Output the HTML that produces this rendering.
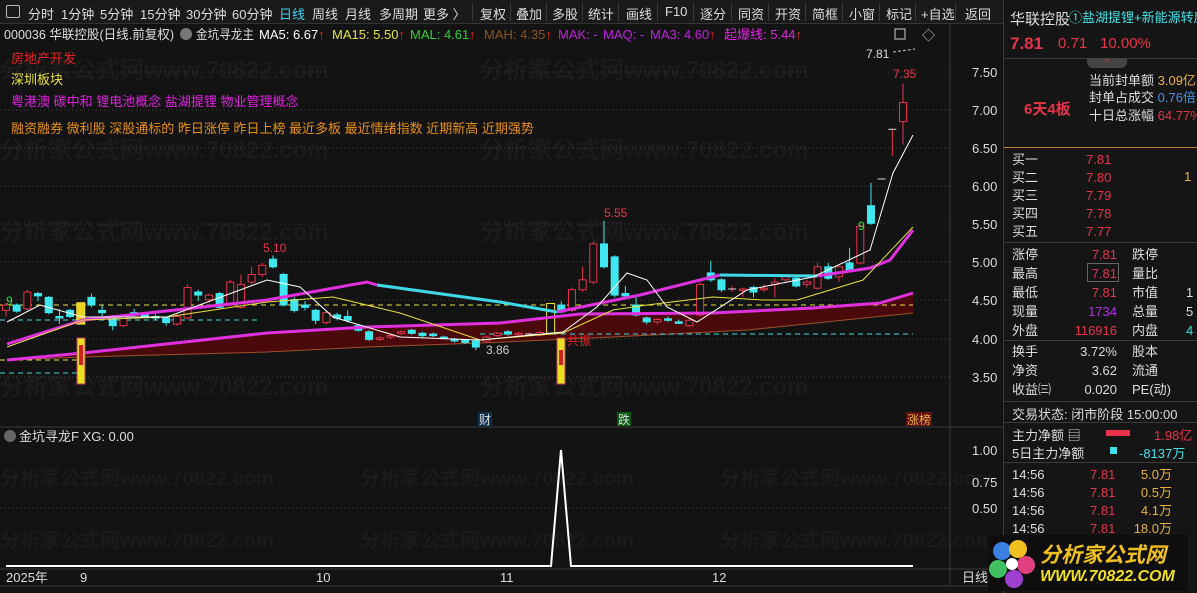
<!DOCTYPE html>
<html><head><meta charset="utf-8">
<style>
*{margin:0;padding:0;box-sizing:border-box}
body{width:1197px;height:593px;background:#131313;overflow:hidden;font-family:"Liberation Sans","Noto Sans CJK SC",sans-serif;color:#ccc;position:relative}
.abs{position:absolute;white-space:nowrap}
#tb{position:absolute;left:0;top:0;width:1003px;height:24px;background:#1a1a1a;border-bottom:1px solid #333;font-size:13px;color:#ddd}
#tb span{position:absolute;top:4px}
.sep{position:absolute;top:3px;width:1px;height:18px;background:#3a3a3a}
#rp{position:absolute;left:1003px;top:0;width:194px;height:593px;background:#151515;border-left:1px solid #3a3a3a;font-size:13px}
.r{position:absolute;white-space:nowrap}
.red{color:#e8344a}.cy{color:#3fe0e8}.yl{color:#e8b040}
</style></head><body>

<svg id="ch" width="1003" height="593" style="position:absolute;left:0;top:0">
<g font-family="Liberation Sans,Noto Sans CJK SC,sans-serif" font-size="24" fill="#1b1b1b" font-weight="bold">
<text x="0" y="78">分析家公式网www.70822.com</text><text x="480" y="78">分析家公式网www.70822.com</text>
<text x="0" y="158">分析家公式网www.70822.com</text><text x="480" y="158">分析家公式网www.70822.com</text>
<text x="0" y="240">分析家公式网www.70822.com</text><text x="480" y="240">分析家公式网www.70822.com</text>
<text x="0" y="395">分析家公式网www.70822.com</text><text x="480" y="395">分析家公式网www.70822.com</text>
<text x="0" y="485" font-size="20">分析家公式网www.70822.com</text><text x="360" y="485" font-size="20">分析家公式网www.70822.com</text><text x="720" y="485" font-size="20">分析家公式网www.70822.com</text>
<text x="0" y="547" font-size="20">分析家公式网www.70822.com</text><text x="360" y="547" font-size="20">分析家公式网www.70822.com</text><text x="720" y="547" font-size="20">分析家公式网www.70822.com</text>
</g>
<g stroke="#444" stroke-dasharray="1 3" stroke-width="1">
<line x1="0" y1="72" x2="950" y2="72"/><line x1="0" y1="110" x2="950" y2="110"/><line x1="0" y1="148" x2="950" y2="148"/><line x1="0" y1="186" x2="950" y2="186"/><line x1="0" y1="224" x2="950" y2="224"/><line x1="0" y1="262" x2="950" y2="262"/><line x1="0" y1="300" x2="950" y2="300"/><line x1="0" y1="339" x2="950" y2="339"/><line x1="0" y1="377" x2="950" y2="377"/>
<line x1="0" y1="508" x2="950" y2="508"/>
</g>
<line x1="0" y1="427" x2="1003" y2="427" stroke="#3a3a3a"/>
<line x1="950" y1="24" x2="950" y2="585" stroke="#3a3a3a"/>
<line x1="0" y1="569" x2="1003" y2="569" stroke="#3a3a3a"/>
<line x1="0" y1="586" x2="1003" y2="586" stroke="#3a3a3a"/>
<polygon points="7,360 83,353 267,333 367,327 500,323 580,314 713,313 813,308 880,303 913,293 913,313 747,330 613,337 480,343 367,347 267,352 83,357 7,360" fill="#4a0a0c"/>
<polyline points="7,360 83,357 267,352 367,347 480,343 613,337 747,330 913,313" fill="none" stroke="#a0502a" stroke-width="1"/>
<line x1="0" y1="305" x2="913" y2="305" stroke="#e8e040" stroke-dasharray="5 4"/>
<line x1="0" y1="320" x2="260" y2="320" stroke="#40d8e0" stroke-dasharray="5 4"/>
<line x1="0" y1="360" x2="80" y2="360" stroke="#e8e040" stroke-dasharray="5 4"/>
<line x1="0" y1="373" x2="80" y2="373" stroke="#40d8e0" stroke-dasharray="5 4"/>
<line x1="480" y1="334" x2="913" y2="334" stroke="#40d8e0" stroke-dasharray="5 4"/>
<g id="cd"></g>
<polyline points="7,360 83,353 267,333 367,327 500,323 580,314 713,313 813,308 880,303 913,293" fill="none" stroke="#e030e0" stroke-width="3"/>
<polyline points="7,344 83,320 267,300 367,282 377,285" fill="none" stroke="#e030e0" stroke-width="3"/>
<polyline points="377,285 500,302 557,312" fill="none" stroke="#40d8e8" stroke-width="3"/>
<polyline points="557,312 640,295 720,275" fill="none" stroke="#e030e0" stroke-width="3"/>
<polyline points="720,275 817,276" fill="none" stroke="#40d8e8" stroke-width="3"/>
<polyline points="817,276 870,268 890,260 913,230" fill="none" stroke="#e030e0" stroke-width="3"/>
<polyline points="7,347 83,320 167,317 267,302 333,297 400,313 480,340 563,333 613,310 647,305 713,297 763,300 797,300 863,280 913,227" fill="none" stroke="#e8e040" stroke-width="1"/>
<polyline points="7,322 40,305 83,317 167,317 267,280 300,287 333,317 400,337 480,340 563,332 597,307 627,273 647,280 667,307 697,322 747,290 813,277 870,250 893,173 913,135" fill="none" stroke="#fff" stroke-width="1"/>
<rect x="77" y="338" width="8" height="46" fill="#e8e020" stroke="#c04060"/><rect x="79" y="345" width="4" height="20" fill="#d02020"/>
<rect x="557" y="338" width="8" height="46" fill="#e8e020" stroke="#c04060"/><rect x="559" y="350" width="4" height="15" fill="#d02020"/>
<g font-size="12" font-family="Liberation Sans,sans-serif">
<text x="263" y="252" fill="#e8344a">5.10</text>
<text x="604" y="217" fill="#e8344a">5.55</text>
<text x="893" y="78" fill="#e8344a">7.35</text>
<text x="866" y="58" fill="#ddd">7.81</text>
<text x="486" y="354" fill="#ccc">3.86</text>
<text x="6" y="305" fill="#30e030">9</text>
<text x="858" y="230" fill="#30e030">9</text>
<text x="567" y="345" fill="#e82020">共振</text>
</g>
<line x1="893" y1="52" x2="915" y2="49" stroke="#ccc" stroke-dasharray="3 2"/>
<g font-size="13" fill="#ddd" font-family="Liberation Sans,sans-serif">
<text x="972" y="77">7.50</text><text x="972" y="115">7.00</text><text x="972" y="153">6.50</text><text x="972" y="191">6.00</text><text x="972" y="229">5.50</text><text x="972" y="267">5.00</text><text x="972" y="305">4.50</text><text x="972" y="344">4.00</text><text x="972" y="382">3.50</text>
<text x="972" y="455">1.00</text><text x="972" y="487">0.75</text><text x="972" y="513">0.50</text>
</g>
<rect x="478" y="412" width="14" height="14" fill="#103050"/><text x="479" y="424" font-size="12" fill="#ddd">财</text>
<rect x="617" y="412" width="14" height="14" fill="#0a5a10"/><text x="618" y="424" font-size="12" fill="#ddd">跌</text>
<rect x="906" y="412" width="26" height="14" fill="#601010"/><text x="907" y="424" font-size="12" fill="#e8b040">涨榜</text>
<polyline points="6,566 551,566 561,450 571,566 913,566" fill="none" stroke="#fff" stroke-width="2"/>
<circle cx="10" cy="436" r="6" fill="#666"/>
<text x="19" y="441" font-size="13" fill="#ddd">金坑寻龙F  XG: 0.00</text>
<g font-size="13" fill="#ddd"><text x="6" y="582">2025年</text><text x="80" y="582">9</text><text x="316" y="582">10</text><text x="500" y="582">11</text><text x="712" y="582">12</text><text x="962" y="582">日线</text></g>
<circle cx="186" cy="34" r="6" fill="#777"/>
<text x="4" y="39" font-size="13" fill="#ddd" textLength="170" lengthAdjust="spacingAndGlyphs">000036 华联控股(日线.前复权)</text>
<text x="196" y="39" font-size="13" fill="#ddd" textLength="58" lengthAdjust="spacingAndGlyphs">金坑寻龙主</text>
<text x="259" y="39" font-size="13" fill="#fff">MA5: 6.67<tspan fill="#e82020">↑</tspan></text>
<text x="332" y="39" font-size="13" fill="#e8e040">MA15: 5.50<tspan fill="#e82020">↑</tspan></text>
<text x="410" y="39" font-size="13" fill="#30d030">MAL: 4.61<tspan fill="#e82020">↑</tspan></text>
<text x="484" y="39" font-size="13" fill="#8a5520">MAH: 4.35<tspan fill="#e82020">↑</tspan></text>
<text x="558" y="39" font-size="13" fill="#c020e0">MAK: -</text>
<text x="603" y="39" font-size="13" fill="#c020e0">MAQ: -</text>
<text x="650" y="39" font-size="13" fill="#c020e0">MA3: 4.60<tspan fill="#e82020">↑</tspan></text>
<text x="724" y="39" font-size="13" fill="#e020e0">起爆线: 5.44<tspan fill="#e82020">↑</tspan></text>
<text x="922" y="40" font-size="13" fill="#ccc">◇</text>
<rect x="895" y="29" width="10" height="10" fill="none" stroke="#ccc"/>
<g font-size="13"><text x="11" y="63" fill="#e82020">房地产开发</text><text x="11" y="84" fill="#e8e040">深圳板块</text><text x="11" y="106" fill="#e020e0">粤港澳 碳中和 锂电池概念 盐湖提锂 物业管理概念</text><text x="11" y="133" fill="#e8901a">融资融券 微利股 深股通标的 昨日涨停 昨日上榜 最近多板 最近情绪指数 近期新高 近期强势</text></g>
</svg>

<div id="tb">
<div style="position:absolute;left:6px;top:5px;width:14px;height:13px;border:1px solid #bbb;border-radius:2px"></div>
<span style="left:28px">分时</span><span style="left:61px">1分钟</span><span style="left:100px">5分钟</span><span style="left:140px">15分钟</span><span style="left:186px">30分钟</span><span style="left:232px">60分钟</span><span style="left:279px;color:#3fd0f0">日线</span><span style="left:312px">周线</span><span style="left:345px">月线</span><span style="left:379px">多周期</span><span style="left:423px">更多 〉</span>
<div class="sep" style="left:472px"></div><span style="left:480px">复权</span><div class="sep" style="left:510px"></div><span style="left:516px">叠加</span><div class="sep" style="left:546px"></div><span style="left:552px">多股</span><div class="sep" style="left:582px"></div><span style="left:588px">统计</span><div class="sep" style="left:618px"></div><span style="left:626px">画线</span><div class="sep" style="left:657px"></div><span style="left:665px">F10</span><div class="sep" style="left:693px"></div><span style="left:700px">逐分</span><div class="sep" style="left:731px"></div><span style="left:738px">同资</span><div class="sep" style="left:768px"></div><span style="left:775px">开资</span><div class="sep" style="left:805px"></div><span style="left:812px">简框</span><div class="sep" style="left:842px"></div><span style="left:849px">小窗</span><div class="sep" style="left:879px"></div><span style="left:886px">标记</span><div class="sep" style="left:915px"></div><span style="left:921px">+自选</span><div class="sep" style="left:955px"></div><span style="left:965px">返回</span>
</div>

<div id="rp">
<div class="r" style="left:6px;top:8px;font-size:15px;color:#ddd">华联控股</div>
<div class="r cy" style="left:65px;top:7px;font-size:13px">①盐湖提锂+新能源转房</div>
<div class="r red" style="left:6px;top:34px;font-size:17px;font-weight:bold">7.81</div>
<div class="r red" style="left:54px;top:35px;font-size:15px">0.71</div>
<div class="r red" style="left:96px;top:35px;font-size:15px">10.00%</div>
<div style="position:absolute;left:0;top:58px;width:194px;height:1px;background:#3a3a3a"></div>
<div style="position:absolute;left:83px;top:58px;width:40px;height:10px;background:#444;border-radius:0 0 6px 6px;color:#e8344a;font-size:9px;text-align:center">⌃</div>
<div class="r" style="left:85px;top:70px;color:#ddd">当前封单额 <span class="yl">3.09亿</span></div>
<div class="r" style="left:85px;top:87px;color:#ddd">封单占成交 <span style="color:#4a90e0">0.76倍</span></div>
<div class="r" style="left:85px;top:105px;color:#ddd">十日总涨幅 <span class="red">64.77%</span></div>
<div class="r red" style="left:20px;top:98px;font-size:15px;font-weight:bold">6天4板</div>
<div style="position:absolute;left:0;top:147px;width:194px;height:1px;background:#c08030"></div>
<div class="r" style="left:8px;top:151px;color:#ddd;line-height:18px">买一<br>买二<br>买三<br>买四<br>买五</div>
<div class="r red" style="left:82px;top:151px;line-height:18px">7.81<br>7.80<br>7.79<br>7.78<br>7.77</div>
<div class="r yl" style="left:180px;top:169px">1</div>
<div style="position:absolute;left:0;top:242px;width:194px;height:1px;background:#3a3a3a"></div>
<div class="r" style="left:8px;top:245px;color:#ddd;line-height:19px">涨停<br>最高<br>最低<br>现量<br>外盘</div>
<div class="r red" style="left:56px;top:245px;line-height:19px;text-align:right;width:57px">7.81<br>7.81<br>7.81<br><span style="color:#b030e0">1734</span><br>116916</div>
<div style="position:absolute;left:83px;top:263px;width:32px;height:19px;border:1px solid #666"></div>
<div class="r" style="left:128px;top:245px;color:#ddd;line-height:19px">跌停<br>量比<br>市值<br>总量<br>内盘</div>
<div class="r" style="left:182px;top:283px;color:#ddd;line-height:19px">1<br>5<br><span class="cy">4</span></div>
<div style="position:absolute;left:0;top:340px;width:194px;height:1px;background:#3a3a3a"></div>
<div class="r" style="left:8px;top:342px;color:#ddd;line-height:19px">换手<br>净资<br>收益㈢</div>
<div class="r" style="left:58px;top:342px;color:#ddd;line-height:19px;text-align:right;width:55px">3.72%<br>3.62<br>0.020</div>
<div class="r" style="left:128px;top:342px;color:#ddd;line-height:19px">股本<br>流通<br>PE(动)</div>
<div style="position:absolute;left:0;top:401px;width:194px;height:1px;background:#3a3a3a"></div>
<div class="r" style="left:8px;top:404px;color:#ddd">交易状态: 闭市阶段 15:00:00</div>
<div style="position:absolute;left:0;top:422px;width:194px;height:1px;background:#3a3a3a"></div>
<div class="r" style="left:8px;top:425px;color:#ddd">主力净额 ▤</div>
<div style="position:absolute;left:102px;top:430px;width:24px;height:6px;background:#e8344a"></div>
<div class="r red" style="left:150px;top:425px">1.98亿</div>
<div class="r" style="left:8px;top:443px;color:#ddd">5日主力净额</div>
<div style="position:absolute;left:106px;top:447px;width:7px;height:7px;background:#3fe0e8"></div>
<div class="r cy" style="left:135px;top:443px">-8137万</div>
<div style="position:absolute;left:0;top:462px;width:194px;height:1px;background:#3a3a3a"></div>
<div class="r" style="left:8px;top:466px;color:#ddd;line-height:18px">14:56<br>14:56<br>14:56<br>14:56</div>
<div class="r red" style="left:86px;top:466px;line-height:18px">7.81<br>7.81<br>7.81<br>7.81</div>
<div class="r yl" style="left:126px;top:466px;line-height:18px;text-align:right;width:42px">5.0万<br>0.5万<br>4.1万<br>18.0万</div>
</div>

<div style="position:absolute;left:988px;top:535px;width:200px;height:56px;background:#0e0e0e">
<svg width="50" height="56" style="position:absolute;left:0;top:0">
<circle cx="14" cy="16" r="9" fill="#3a80e0"/><circle cx="30" cy="14" r="9" fill="#f0c020"/><circle cx="38" cy="30" r="9" fill="#e04080"/><circle cx="26" cy="44" r="9" fill="#a040d0"/><circle cx="10" cy="34" r="9" fill="#40c060"/><circle cx="24" cy="29" r="6" fill="#fff"/>
</svg>
<div class="abs" style="left:52px;top:4px;font-size:21px;font-weight:bold;color:#f0c020;font-style:italic">分析家公式网</div>
<div class="abs" style="left:52px;top:33px;font-size:16px;font-weight:bold;color:#f0e020;font-style:italic">WWW.70822.COM</div>
</div>

<script>
var C=[[4.38,4.45,4.48,4.30],[4.45,4.37,4.47,4.35],[4.40,4.62,4.65,4.38],[4.60,4.57,4.62,4.50],[4.55,4.35,4.57,4.33],[4.30,4.28,4.40,4.20],[4.38,4.30,4.40,4.28],[0,0,0,0],[4.55,4.45,4.60,4.42],[4.38,4.35,4.45,4.30],[4.30,4.18,4.32,4.12],[4.18,4.30,4.32,4.16],[4.35,4.34,4.40,4.30],[4.33,4.30,4.36,4.28],[4.30,4.28,4.33,4.25],[4.28,4.22,4.30,4.18],[4.20,4.30,4.33,4.18],[4.28,4.68,4.72,4.26],[4.62,4.58,4.65,4.50],[4.52,4.58,4.60,4.48],[4.60,4.42,4.62,4.40],[4.45,4.75,4.78,4.43],[4.42,4.72,4.85,4.40],[4.75,4.85,4.95,4.72],[4.85,4.97,5.00,4.82],[5.05,4.95,5.10,4.93],[4.85,4.45,4.87,4.43],[4.52,4.38,4.55,4.35],[4.45,4.42,4.50,4.38],[4.38,4.25,4.40,4.20],[4.22,4.35,4.38,4.20],[4.32,4.28,4.35,4.25],[4.30,4.25,4.38,4.22],[4.18,4.12,4.20,4.10],[4.10,4.00,4.12,3.98],[4.00,4.02,4.04,3.98],[4.03,4.05,4.07,4.00],[4.08,4.10,4.12,4.06],[4.12,4.08,4.14,4.06],[4.08,4.05,4.10,4.03],[4.07,4.05,4.09,4.03],[4.03,4.02,4.05,4.00],[4.00,3.98,4.02,3.96],[3.99,3.96,4.00,3.94],[3.98,3.90,4.00,3.86],[3.98,4.03,4.05,3.96],[4.05,4.08,4.10,4.03],[4.10,4.07,4.12,4.05],[4.06,4.08,4.10,4.04],[4.07,4.07,4.09,4.05],[4.06,4.09,4.11,4.04],[0,0,0,0],[4.45,4.36,4.50,4.34],[4.38,4.65,4.68,4.36],[4.65,4.78,4.95,4.62],[4.75,5.25,5.28,4.72],[5.25,4.95,5.55,4.93],[5.08,4.58,5.10,4.55],[4.60,4.57,4.70,4.55],[4.45,4.32,4.55,4.30],[4.28,4.23,4.30,4.20],[4.23,4.26,4.28,4.20],[4.27,4.25,4.30,4.23],[4.23,4.22,4.26,4.20],[4.18,4.25,4.28,4.16],[4.32,4.72,4.75,4.30],[4.87,4.78,5.03,4.75],[4.78,4.65,4.80,4.62],[4.66,4.66,4.70,4.62],[4.65,4.66,4.68,4.55],[4.68,4.62,4.70,4.55],[4.66,4.67,4.72,4.62],[4.72,4.75,4.80,4.55],[4.78,4.82,4.85,4.75],[4.80,4.70,4.82,4.68],[4.72,4.75,4.78,4.68],[4.67,4.95,5.00,4.65],[4.95,4.80,5.00,4.78],[4.82,4.95,4.97,4.75],[5.00,4.90,5.20,4.88],[5.00,5.48,5.50,4.98],[5.75,5.52,6.05,5.50],[6.10,6.10,6.10,6.10],[6.75,6.75,6.75,6.40],[6.85,7.10,7.35,6.55]];
function Y(p){return 72+(7.5-p)*76.4}
var h='';var n=C.length;
for(var i=0;i<n;i++){var c=C[i];if(!c[0])continue;var x=6+i*(897/(n-1));
var up=c[1]>=c[0];var col=up?'#e8344a':'#3fe8f0';var t=Y(Math.max(c[0],c[1])),b=Y(Math.min(c[0],c[1]));if(b-t<1.5)b=t+1.5;
h+='<line x1="'+x+'" y1="'+Y(c[2])+'" x2="'+x+'" y2="'+Y(c[3])+'" stroke="'+col+'"/>';
if(c[0]==c[1]){h+='<line x1="'+(x-4)+'" y1="'+t+'" x2="'+(x+4)+'" y2="'+t+'" stroke="#ddd"/>';continue;}
h+='<rect x="'+(x-3.5)+'" y="'+t+'" width="7" height="'+(b-t)+'" fill="'+(up?'#131313':col)+'" stroke="'+col+'"/>';}
var y1=Y(4.48),y2=Y(4.20);var xa=6+7*(897/(n-1));h+='<rect x="'+(xa-4)+'" y="'+y1+'" width="8" height="'+(y2-y1)+'" fill="#f0d020" stroke="#e8e040"/>';
y1=Y(4.47);y2=Y(4.08);xa=6+51*(897/(n-1));h+='<rect x="'+(xa-4)+'" y="'+y1+'" width="8" height="'+(y2-y1)+'" fill="#131313" stroke="#f0e020"/>';
document.getElementById('cd').innerHTML=h;
</script>
</body></html>
